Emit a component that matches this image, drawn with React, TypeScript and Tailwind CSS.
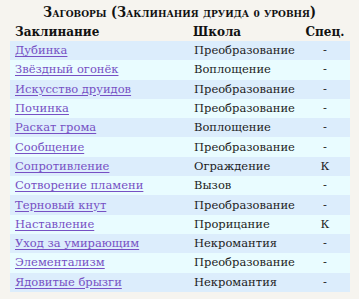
const spells = [
  { name: "Дубинка", school: "Преобразование", spec: "-" },
  { name: "Звёздный огонёк", school: "Воплощение", spec: "-" },
  { name: "Искусство друидов", school: "Преобразование", spec: "-" },
  { name: "Починка", school: "Преобразование", spec: "-" },
  { name: "Раскат грома", school: "Воплощение", spec: "-" },
  { name: "Сообщение", school: "Преобразование", spec: "-" },
  { name: "Сопротивление", school: "Ограждение", spec: "К" },
  { name: "Сотворение пламени", school: "Вызов", spec: "-" },
  { name: "Терновый кнут", school: "Преобразование", spec: "-" },
  { name: "Наставление", school: "Прорицание", spec: "К" },
  { name: "Уход за умирающим", school: "Некромантия", spec: "-" },
  { name: "Элементализм", school: "Преобразование", spec: "-" },
  { name: "Ядовитые брызги", school: "Некромантия", spec: "-" },
]

export default function App() {
  return (
    <div className="h-[299px] w-[359px] overflow-hidden bg-[#f6f4ef] pt-[3px] font-['DejaVu_Serif',serif] text-[#1c1c1c]">
      <h3 className="text-center font-['DejaVu_Serif_Condensed','DejaVu_Serif',serif] text-[14px] font-bold leading-[19px] text-[#111] [font-stretch:condensed] [font-variant:small-caps]">
        Заговоры (Заклинания друида <span className="text-[10px]">0</span> уровня)
      </h3>
      <table className="ml-[10px] mt-[1px] w-[340px] table-fixed border-collapse text-[11.5px]">
        <colgroup>
          <col className="w-[179px]" />
          <col className="w-[111px]" />
          <col className="w-[50px]" />
        </colgroup>
        <thead>
          <tr className="h-[17px] text-[12px] leading-[17px] text-[#111]">
            <th className="pl-[5px] text-left font-bold">Заклинание</th>
            <th className="pl-[4px] text-left font-bold">Школа</th>
            <th className="text-center font-bold">Спец.</th>
          </tr>
        </thead>
        <tbody>
          {spells.map((s, i) => (
            <tr key={s.name} className={i % 2 === 0 ? "h-[19.3px] bg-[#dcedfc]" : "h-[19.3px] bg-[#e9fcff]"}>
              <td className="whitespace-nowrap pl-[5px] leading-[19px]">
                <a href="#" className="text-[#7650c4] underline decoration-1 underline-offset-2">
                  {s.name}
                </a>
              </td>
              <td className="whitespace-nowrap pl-[5px] leading-[19px]">{s.school}</td>
              <td className="text-center leading-[19px]">{s.spec}</td>
            </tr>
          ))}
        </tbody>
      </table>
    </div>
  )
}
